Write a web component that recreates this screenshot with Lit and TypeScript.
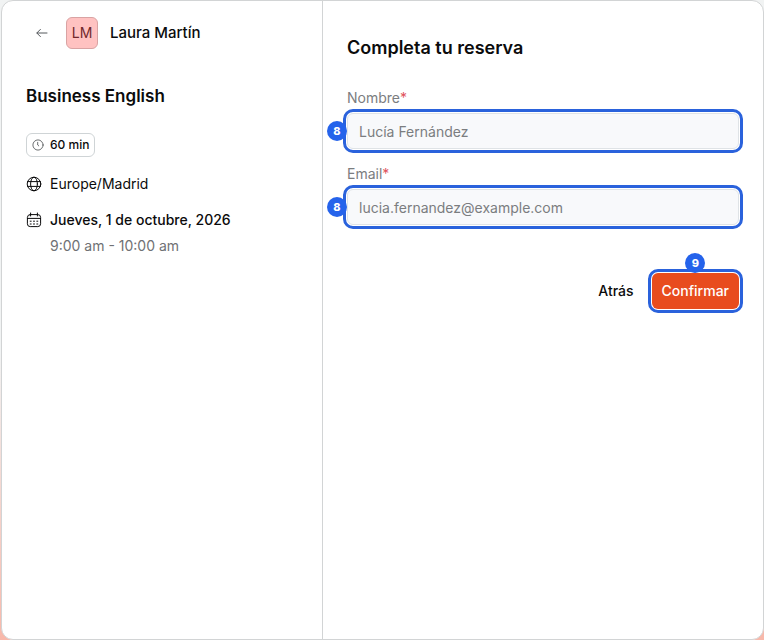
import { LitElement, html, css, svg } from "lit";
import { customElement, property } from "lit/decorators.js";

const arrowIcon = svg`<path d="M13 8H3M6.4 4.4 2.8 8l3.6 3.6" />`;
const clockIcon = svg`<circle cx="8" cy="8" r="6.8" /><path d="M7.6 4.4V8l1.4 1.2" />`;
const globeIcon = svg`<circle cx="8" cy="8" r="6.8" /><ellipse cx="8" cy="8" rx="3.4" ry="6.8" /><path d="M1.6 5.6h12.8M1.6 10.4h12.8" />`;
const calendarIcon = svg`<rect x="1.4" y="2.6" width="13.2" height="12" rx="2.8" /><path d="M1.4 6.4h13.2M4.6 1v3M11.4 1v3" /><path d="M7.5 9.2h1M10.8 9.2h1M4.2 12h1M7.5 12h1M10.8 12h1M4.2 9.2h1" />`;

const icon = (shape: unknown, size: number) => html`<svg
  width=${size} height=${size} viewBox="0 0 16 16" fill="none"
  stroke="currentColor" stroke-width="1" stroke-linecap="round"
  stroke-linejoin="round" aria-hidden="true">${shape}</svg>`;

@customElement("step-marker")
class StepMarker extends LitElement {
  @property({ type: Number }) step = 0;
  @property({ reflect: true }) side = "left";

  static styles = css`
    :host { display: block; position: relative; }
    .ring {
      display: grid;
      border-radius: 6px;
      outline: 3px solid #2a62dc;
      outline-offset: 1px;
    }
    .badge {
      position: absolute;
      width: 20px;
      height: 20px;
      border-radius: 50%;
      background: #2563eb;
      color: #fff;
      font-size: 11px;
      line-height: 20px;
      font-weight: 800;
      text-align: center;
    }
    :host([side="left"]) .badge { left: -20px; top: calc(50% - 10px); }
    :host([side="top"]) .badge { top: -20px; left: calc(50% - 10px); }
  `;

  render() {
    return html`<div class="ring"><slot></slot></div><span class="badge">${this.step}</span>`;
  }
}

@customElement("app-root")
class AppRoot extends LitElement {
  static styles = css`
    :host {
      display: grid;
      min-height: 100vh;
      box-sizing: border-box;
      padding-left: 1px;
      background: linear-gradient(#f1f3f3 0%, #f1f3f3 55%, #f8b8aa 100%);
      color: #0b0b0c;
      font: 400 14px/22px Inter, "Liberation Sans", sans-serif;
    }
    * { box-sizing: border-box; }
    h1, h2, p { margin: 0; }
    svg { display: block; flex: none; }
    button, input { font: inherit; }

    .card {
      display: grid;
      grid-template-columns: 321px 1fr;
      background: #fff;
      border: 1px solid #d2d4d5;
      border-radius: 12px;
      overflow: hidden;
    }
    .summary {
      padding: 16px 24px;
      border-right: 1px solid #d2d4d5;
    }
    .host {
      display: flex;
      align-items: center;
      gap: 8px;
      font-size: 15px;
      font-weight: 500;
    }
    .back {
      display: grid;
      place-items: center;
      width: 32px;
      height: 32px;
      padding: 0;
      border: 0;
      background: none;
      color: #55595c;
    }
    .avatar {
      width: 32px;
      height: 32px;
      margin-right: 4px;
      border: 1px solid #d9a3a3;
      border-radius: 6px;
      background: #ffc2c1;
      color: #71282c;
      font-size: 14px;
      line-height: 30px;
      font-weight: 400;
      text-align: center;
    }
    h1, h2 {
      line-height: 30px;
      font-weight: 600;
    }
    h1 { margin-top: 32px; font-size: 17px; }
    h2 { font-size: 18px; }
    .chip {
      display: flex;
      align-items: center;
      gap: 6px;
      width: fit-content;
      height: 24px;
      margin: 22px 0 16px;
      padding: 0 5px;
      border: 1px solid #cfd4d6;
      border-radius: 6px;
      font-size: 12px;
      line-height: 16px;
      font-weight: 500;
    }
    .chip svg { color: #3c4043; }
    .details { display: grid; gap: 14px; }
    .row {
      display: flex;
      align-items: center;
      gap: 8px;
    }
    .date { font-weight: 500; }
    .time {
      margin: 4px 0 0 24px;
      color: #6f7174;
    }

    .form {
      min-width: 0;
      padding: 32px 24px;
    }
    .fields {
      display: grid;
      gap: 14px;
      margin-top: 24px;
    }
    label {
      display: block;
      margin-bottom: 4px;
      color: #7b7d80;
    }
    .required { color: #e0525b; }
    input {
      width: 100%;
      min-width: 0;
      height: 36px;
      padding: 0 11px;
      border: 1px solid #dfe3e6;
      border-radius: 6px;
      background: #f8f9fb;
      outline: none;
    }
    input::placeholder { color: #7b7d80; opacity: 1; }
    .actions {
      display: flex;
      justify-content: flex-end;
      gap: 8px;
      margin-top: 48px;
    }
    .ghost, .primary {
      height: 36px;
      padding: 0 10px;
      border: 0;
      border-radius: 6px;
      font-weight: 500;
      white-space: nowrap;
    }
    .ghost { background: none; color: inherit; }
    .primary { background: #e84c1e; color: #fff; }
  `;

  render() {
    return html`
      <main class="card">
        <section class="summary">
          <div class="host">
            <button class="back" aria-label="Volver">${icon(arrowIcon, 16)}</button>
            <span class="avatar" aria-hidden="true">LM</span>
            <span>Laura Martín</span>
          </div>
          <h1>Business English</h1>
          <div class="chip">${icon(clockIcon, 12)}<span>60 min</span></div>
          <div class="details">
            <div class="row">${icon(globeIcon, 16)}<span>Europe/Madrid</span></div>
            <div class="row date">${icon(calendarIcon, 16)}<span>Jueves, 1 de octubre, 2026</span></div>
          </div>
          <p class="time">9:00 am - 10:00 am</p>
        </section>
        <form class="form" @submit=${(e: Event) => e.preventDefault()}>
          <h2>Completa tu reserva</h2>
          <div class="fields">
            <div>
              <label for="name">Nombre<span class="required">*</span></label>
              <step-marker step="8" side="left">
                <input id="name" type="text" required placeholder="Lucía Fernández" />
              </step-marker>
            </div>
            <div>
              <label for="email">Email<span class="required">*</span></label>
              <step-marker step="8" side="left">
                <input id="email" type="email" required placeholder="lucia.fernandez@example.com" />
              </step-marker>
            </div>
          </div>
          <div class="actions">
            <button class="ghost" type="button">Atrás</button>
            <step-marker step="9" side="top">
              <button class="primary" type="submit">Confirmar</button>
            </step-marker>
          </div>
        </form>
      </main>
    `;
  }
}
